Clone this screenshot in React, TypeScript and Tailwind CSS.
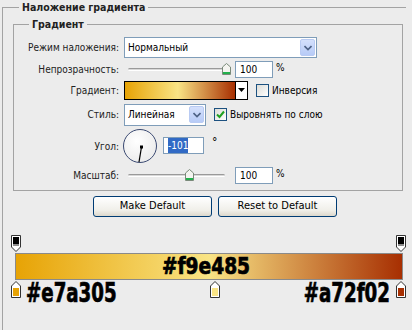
import React from 'react';

// XP-style pieces for the Photoshop "Gradient Overlay" panel
function DropButton() {
  return (
    <div className="ml-auto mr-[1px] flex h-[17px] w-[15px] items-center justify-center rounded-[2px] border border-[#b9cbf3] bg-[linear-gradient(to_bottom,#d4e0fc,#b7cbf7)]">
      <svg width="8" height="6" viewBox="0 0 8 6">
        <path d="M0.5 1 L4 4.5 L7.5 1" fill="none" stroke="#4d6185" strokeWidth="1.6" />
      </svg>
    </div>
  );
}

function Checkbox({ checked }: { checked?: boolean }) {
  return (
    <div className="flex h-[13px] w-[13px] shrink-0 items-center justify-center border border-[#1c5180] bg-[linear-gradient(135deg,#dcdcd7,#ffffff)]">
      {checked && (
        <svg width="9" height="9" viewBox="0 0 9 9">
          <path d="M1 4.5 L3.5 7 L8 1.5" fill="none" stroke="#21a121" strokeWidth="2" />
        </svg>
      )}
    </div>
  );
}

function Slider({ pos }: { pos: number }) {
  return (
    <div className="relative h-full w-[111px]">
      <div className="absolute left-[4px] top-[8px] h-[3px] w-[97px] rounded-full border-t border-[#9a9a9a] border-b border-b-white bg-[#d8d8d8]" />
      <svg className="absolute top-[3px]" style={{ left: pos }} width="9" height="12" viewBox="0 0 9 12">
        <path d="M0.5 4 L4.5 0.5 L8.5 4 V11.5 H0.5 Z" fill="#f4f4f0" stroke="#7a8a7a" />
        <rect x="1" y="9" width="7" height="2" fill="#22b14c" />
      </svg>
    </div>
  );
}

function NumberBox({ children, w = 'w-[38px]' }: { children: React.ReactNode; w?: string }) {
  return (
    <div className={`${w} flex h-[17px] items-center border border-[#7f9db9] bg-white pl-[4px]`}>
      {children}
    </div>
  );
}

function Label({ children }: { children: React.ReactNode }) {
  return <div className="w-[105px] shrink-0 text-right text-[#222]">{children}</div>;
}

function TopStop() {
  return (
    <svg width="10" height="17" viewBox="0 0 10 17">
      <path d="M0.5 0.5 H9.5 V12 L5 16.5 L0.5 12 Z" fill="#fff" stroke="#333" />
      <rect x="2" y="2" width="6" height="7" fill="#000" />
      <rect x="2" y="9" width="6" height="2" fill="#8c8c8c" />
    </svg>
  );
}

function BottomStop({ color }: { color: string }) {
  return (
    <svg width="10" height="17" viewBox="0 0 10 17">
      <path d="M5 0.5 L9.5 5 V16.5 H0.5 V5 Z" fill="#fff" stroke="#333" />
      <rect x="2" y="7" width="6" height="8" fill={color} />
    </svg>
  );
}

const bigText =
  "inline-block font-['DejaVu_Sans_Condensed','DejaVu_Sans',sans-serif] font-bold text-black [-webkit-text-stroke:0.7px_black]";

export default function App() {
  return (
    <div className="flex h-[330px] w-[412px] overflow-hidden bg-[#ececec] font-['DejaVu_Sans_Condensed','DejaVu_Sans',sans-serif] text-[10px] text-black">
      <fieldset className="ml-[2px] w-[400px] shrink-0 border-l border-t border-[#a3a3a3]">
        <legend className="ml-[16px] px-[3px] text-[10.5px] font-bold leading-[14px] text-[#222]">
          Наложение градиента
        </legend>

        <fieldset className="ml-[10px] mt-[3px] w-[390px] border border-[#a3a3a3] pb-[6px]">
          <legend className="ml-[15px] px-[3px] text-[10.5px] font-bold leading-[14px] text-[#222]">Градиент</legend>

          {/* blend mode */}
          <div className="mt-[6px] flex h-[21px] items-center">
            <Label>Режим наложения:</Label>
            <div className="ml-[5px] flex h-[21px] w-[193px] items-center border border-[#7f9db9] bg-white pl-[3px]">
              <span>Нормальный</span>
              <DropButton />
            </div>
          </div>

          {/* opacity */}
          <div className="mt-[2px] flex h-[18px] items-center">
            <Label>Непрозрачность:</Label>
            <div className="ml-[5px] flex h-full items-center">
              <Slider pos={98} />
              <NumberBox>100</NumberBox>
              <span className="ml-[3px] self-start">%</span>
            </div>
          </div>

          {/* gradient */}
          <div className="mt-[2px] flex h-[20px] items-center">
            <Label>Градиент:</Label>
            <div className="ml-[5px] flex h-[19px] border border-black">
              <div className="w-[110px] bg-[linear-gradient(to_right,#e7a305,#f9e485_48%,#a72f02)]" />
              <div className="flex w-[12px] items-center justify-center border-l border-black bg-white">
                <svg width="7" height="4" viewBox="0 0 7 4">
                  <path d="M0 0 H7 L3.5 4 Z" fill="#000" />
                </svg>
              </div>
            </div>
            <div className="ml-[8px]">
              <Checkbox />
            </div>
            <span className="ml-[3px]">Инверсия</span>
          </div>

          {/* style */}
          <div className="mt-[3px] flex h-[23px] items-center">
            <Label>Стиль:</Label>
            <div className="ml-[5px] flex h-[22px] w-[82px] items-center border border-[#7f9db9] bg-white pl-[3px]">
              <span>Линейная</span>
              <DropButton />
            </div>
            <div className="ml-[8px]">
              <Checkbox checked />
            </div>
            <span className="ml-[3px]">Выровнять по слою</span>
          </div>

          {/* angle */}
          <div className="mt-[2px] flex h-[36px] items-center">
            <Label>Угол:</Label>
            <div className="ml-[4px] h-[34px] w-[34px] rounded-full border border-[#3b4a72] bg-[radial-gradient(circle_at_40%_35%,#ffffff,#e6e6e6)]">
              <svg width="32" height="32" viewBox="0 0 32 32">
                <line x1="17.5" y1="17" x2="15" y2="32" stroke="#000" strokeWidth="1.2" />
                <rect x="16" y="15.5" width="3" height="3" fill="#000" />
              </svg>
            </div>
            <div className="ml-[6px] mt-[-2px]">
              <NumberBox w="w-[41px]">
                <span className="bg-[#316ac5] text-white">-101</span>
              </NumberBox>
            </div>
            <span className="ml-[8px] mt-[8px] self-start text-[12px] leading-none">°</span>
          </div>

          {/* scale */}
          <div className="mt-[2px] flex h-[18px] items-center">
            <Label>Масштаб:</Label>
            <div className="ml-[5px] flex h-full items-center">
              <Slider pos={61} />
              <NumberBox>100</NumberBox>
              <span className="ml-[3px] self-start">%</span>
            </div>
          </div>
        </fieldset>

        {/* buttons */}
        <div className="ml-[90px] mt-[5px] flex gap-[6px]">
          <button className="h-[21px] w-[119px] rounded-[3px] border border-[#003c74] bg-[linear-gradient(to_bottom,#ffffff,#f0efe9_70%,#dcd8cc)] text-[11px] text-black">
            Make Default
          </button>
          <button className="h-[21px] w-[119px] rounded-[3px] border border-[#003c74] bg-[linear-gradient(to_bottom,#ffffff,#f0efe9_70%,#dcd8cc)] text-[11px] text-black">
            Reset to Default
          </button>
        </div>

        {/* gradient editor */}
        <div className="ml-[8px] mt-[18px] flex h-[17px] w-[395px] justify-between">
          <TopStop />
          <TopStop />
        </div>
        <div className="ml-[12px] mt-[1px] flex h-[27px] w-[388px] justify-center border border-[#8a8a8a] bg-[linear-gradient(to_right,#e7a305,#f9e485_50%,#a72f02)] pr-[6px]">
          <span className={`${bigText} origin-center scale-x-[0.9] text-[23px] leading-[25px]`}>#f9e485</span>
        </div>
        <div className="relative ml-[8px] mt-[1px] flex h-[24px] w-[395px] items-start">
          <BottomStop color="#e7a305" />
          <span className={`${bigText} ml-[5px] mt-[-2px] origin-left scale-x-[0.75] text-[27px] leading-[27px]`}>#e7a305</span>
          <div className="absolute left-[199px] top-0">
            <BottomStop color="#f9e485" />
          </div>
          <span className={`${bigText} ml-auto mr-[6px] mt-[-2px] origin-right scale-x-[0.75] text-[27px] leading-[27px]`}>#a72f02</span>
          <BottomStop color="#a72f02" />
        </div>
      </fieldset>
      <div className="ml-[8px] mt-[17px] w-px shrink-0 bg-[#a3a3a3]" />
    </div>
  );
}
